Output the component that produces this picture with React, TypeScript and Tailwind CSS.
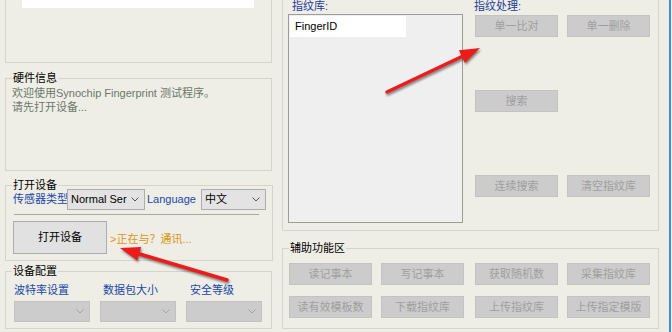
import React from 'react';

function Chevron({ color }: { color: string }) {
  return (
    <svg width="8" height="5" viewBox="0 0 8 5" className="shrink-0">
      <polyline points="0.5,0.5 4,4 7.5,0.5" fill="none" stroke={color} strokeWidth="1" />
    </svg>
  );
}

function Select({ value, className = '', disabled = false }: { value?: string; className?: string; disabled?: boolean }) {
  return (
    <div
      className={`h-[21px] flex items-center justify-between pl-[3px] pr-[5px] border ${
        disabled ? 'bg-[#cccccc] border-[#c2c2c2]' : 'bg-[#e3e3e3] border-[#adadad]'
      } ${className}`}
    >
      <span className="text-black whitespace-nowrap overflow-hidden">{value}</span>
      <Chevron color={disabled ? '#a3a3a3' : '#555555'} />
    </div>
  );
}

function Btn({ children, className = '' }: { children: React.ReactNode; className?: string }) {
  return (
    <div
      className={`w-[83px] h-[22px] flex items-center justify-center bg-[#cccccc] border border-[#c3c3c3] text-[#9f9f9f] ${className}`}
    >
      {children}
    </div>
  );
}

export default function App() {
  return (
    <div className="relative w-[672px] h-[332px] overflow-hidden bg-[#efeee6] text-[11px] font-['Liberation_Sans','Noto_Sans_CJK_SC',sans-serif] flex">
      {/* left column */}
      <div className="w-[277px] shrink-0 pl-[5px] flex flex-col">
        <div className="w-[267px] h-[63px] border-x border-b border-[#d6d4ca] pl-[16px]">
          <div className="w-[232px] h-[8px] bg-white" />
        </div>

        <fieldset className="mt-[9px] w-[267px] h-[99px] border border-[#d6d4ca] px-[6px]">
          <legend className="px-px leading-[12px] text-black">硬件信息</legend>
          <div className="pt-[2px] leading-[14px] text-[#6b786b]">
            <div>欢迎使用Synochip Fingerprint 测试程序。</div>
            <div>请先打开设备...</div>
          </div>
        </fieldset>

        <fieldset className="mt-[8px] w-[267px] h-[82px] border border-[#d6d4ca] px-[6px]">
          <legend className="px-px leading-[12px] text-black">打开设备</legend>
          <div className="-mt-[2px] ml-px flex items-center h-[21px]">
            <span className="w-[54px] whitespace-nowrap text-[#1a47a8]">传感器类型</span>
            <Select value="Normal Ser" className="w-[78px]" />
            <span className="ml-[2px] w-[54px] whitespace-nowrap text-[#1a47a8]">Language</span>
            <Select value="中文" className="w-[65px]" />
          </div>
          <div className="mt-[4px] ml-[2px] w-[245px] h-px bg-[#a7a7a7]" />
          <div className="mt-[6px] ml-px flex items-center">
            <div className="w-[94px] h-[33px] flex items-center justify-center bg-[#e1e1e1] border border-[#adadad] text-black">
              打开设备
            </div>
            <span className="ml-[3px] pt-[3px] text-[#dd9416] whitespace-nowrap">&gt;正在与？通讯...</span>
          </div>
        </fieldset>

        <fieldset className="mt-[4px] w-[267px] h-[64px] border border-[#d6d4ca] px-[6px]">
          <legend className="px-px leading-[12px] text-black">设备配置</legend>
          <div className="mt-[6px] ml-[2px] grid grid-cols-[76px_76px_76px] gap-x-[10px]">
            <span className="leading-[14px] text-[#1a47a8] whitespace-nowrap">波特率设置</span>
            <span className="leading-[14px] ml-[3px] text-[#1a47a8] whitespace-nowrap">数据包大小</span>
            <span className="leading-[14px] ml-[4px] text-[#1a47a8] whitespace-nowrap">安全等级</span>
            <Select disabled className="mt-[4px]" />
            <Select disabled className="mt-[4px]" />
            <Select disabled className="mt-[4px]" />
          </div>
        </fieldset>
      </div>

      {/* right column */}
      <div className="w-[377px] shrink-0 ml-[5px] flex flex-col">
        <div className="w-[377px] h-[231px] border-x border-b border-[#d6d4ca] flex">
          <div className="pl-[5px] flex flex-col">
            <span className="ml-[4px] leading-[12px] text-[#1a3c9a]">指纹库:</span>
            <div className="mt-[2px] w-[175px] h-[209px] border border-[#9c9c9c] bg-[#efefef] p-px">
              <div className="w-[116px] h-[21px] bg-white flex items-center pl-[5px] text-black">FingerID</div>
            </div>
          </div>
          <div className="ml-[11px] flex flex-col">
            <span className="leading-[12px] text-[#1a3c9a]">指纹处理:</span>
            <div className="mt-[3px] ml-px flex gap-[9px]">
              <Btn>单一比对</Btn>
              <Btn>单一删除</Btn>
            </div>
            <div className="mt-[53px] ml-px flex">
              <Btn>搜索</Btn>
            </div>
            <div className="mt-[63px] ml-px flex gap-[9px]">
              <Btn>连续搜索</Btn>
              <Btn>清空指纹库</Btn>
            </div>
          </div>
        </div>

        <fieldset className="mt-[11px] w-[377px] h-[87px] border border-[#d6d4ca] px-[6px]">
          <legend className="px-px leading-[12px] text-black">辅助功能区</legend>
          <div className="mt-[9px] grid grid-cols-[83px_83px_83px_83px] gap-y-[11px]">
            <Btn>读记事本</Btn>
            <Btn className="ml-[9px]">写记事本</Btn>
            <Btn className="ml-[20px]">获取随机数</Btn>
            <Btn className="ml-[29px]">采集指纹库</Btn>
            <Btn>读有效模板数</Btn>
            <Btn className="ml-[9px]">下载指纹库</Btn>
            <Btn className="ml-[20px]">上传指纹库</Btn>
            <Btn className="ml-[29px]">上传指定模版</Btn>
          </div>
        </fieldset>
      </div>

      <div className="ml-[10px] w-[2px] h-full bg-[#3d8ee0]" />
      <div className="flex-1 bg-[#f6f6f6]" />

      {/* annotation arrows */}
      <svg
        className="absolute inset-0 pointer-events-none drop-shadow-[1px_2px_1px_rgba(0,0,0,0.45)]"
        width="672"
        height="332"
        viewBox="0 0 672 332"
      >
        <line x1="387" y1="92" x2="463" y2="56" stroke="#ee1b1b" strokeWidth="3.5" strokeLinecap="round" />
        <polygon points="480,48 464.9,62.9 458.9,50.3" fill="#ee1b1b" />
        <line x1="227" y1="280" x2="138" y2="253.5" stroke="#ee1b1b" strokeWidth="3.5" strokeLinecap="round" />
        <polygon points="120,248 141.2,247 137.2,260.4" fill="#ee1b1b" />
      </svg>
    </div>
  );
}
